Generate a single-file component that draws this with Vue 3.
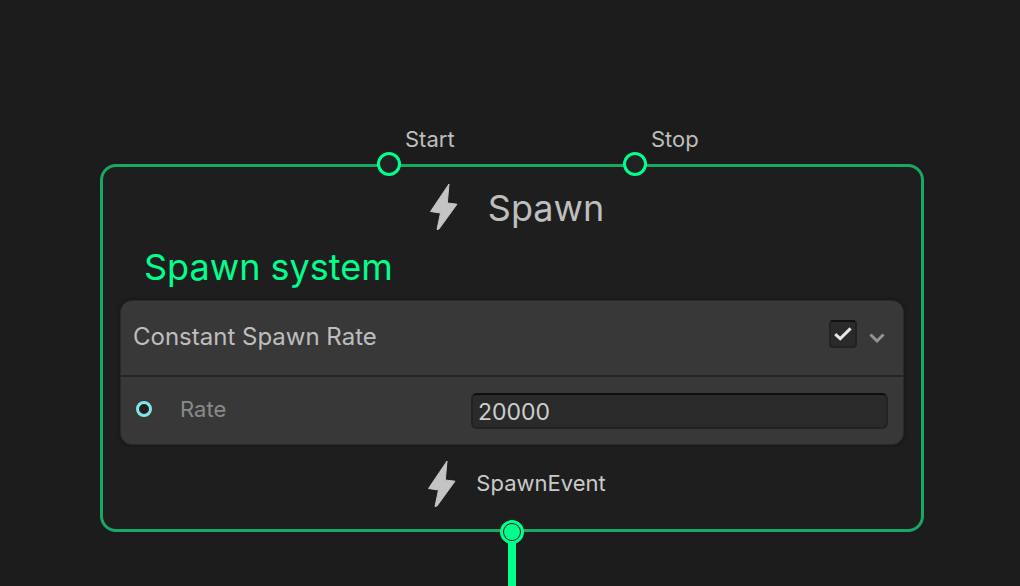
<template>
    <main class="graph">
        <section class="context-node">
            <div class="ports ports-in">
                <div v-for="port in inputPorts" :key="port" class="flow-port">
                    <span class="port-label">{{ port }}</span>
                    <span class="port-dot"></span>
                </div>
            </div>

            <header class="node-header">
                <svg class="bolt" viewBox="0 0 48 48" aria-hidden="true">
                    <path d="M29 1L10.5 28.5L20.5 30L17 46.5L19 46L37 21.2L27.3 20Z" />
                </svg>
                <h1 class="node-title">Spawn</h1>
            </header>

            <h2 class="system-name">Spawn system</h2>

            <div class="block">
                <div class="block-header">
                    <label class="block-title" for="block-enabled">Constant Spawn Rate</label>
                    <input id="block-enabled" v-model="enabled" type="checkbox" class="block-check" />
                    <button class="collapse-btn" aria-label="Collapse" @click="expanded = !expanded">
                        <svg viewBox="0 0 16 12" aria-hidden="true">
                            <path d="M1.5 2.5L8 9L14.5 2.5" />
                        </svg>
                    </button>
                </div>
                <div v-if="expanded" class="block-row">
                    <span class="data-port"></span>
                    <label class="row-label" for="rate">Rate</label>
                    <input id="rate" v-model="rate" type="text" class="row-input" />
                </div>
            </div>

            <footer class="node-footer">
                <svg class="bolt" viewBox="0 0 48 48" aria-hidden="true">
                    <path d="M29 1L10.5 28.5L20.5 30L17 46.5L19 46L37 21.2L27.3 20Z" />
                </svg>
                <span class="event-name">SpawnEvent</span>
            </footer>

            <div class="ports ports-out">
                <span class="edge"></span>
                <span class="port-dot connected"></span>
            </div>
        </section>
    </main>
</template>

<script setup>
import { ref } from 'vue'

const inputPorts = ['Start', 'Stop']
const enabled = ref(true)
const expanded = ref(true)
const rate = ref('20000')
</script>

<style>
body {
    background: #1c1c1c;
}
</style>

<style scoped>
.graph {
    box-sizing: border-box;
    min-height: 100vh;
    padding: 164px 96px 0 100px;
    overflow: hidden;
    font-family: Inter, "Liberation Sans", sans-serif;
    color: #bebebe;
}

.context-node {
    position: relative;
    padding: 12px 17px 21px;
    border: 3px solid #18a866;
    border-radius: 16px;
    background: #1e1e1e;
}

.ports {
    position: absolute;
    left: 0;
    right: 0;
    display: flex;
    justify-content: center;
}

.ports-in {
    top: -15px;
}

.ports-out {
    bottom: -15px;
}

.flow-port {
    position: relative;
    display: flex;
    justify-content: center;
    width: 246px;
}

.port-label {
    position: absolute;
    left: calc(50% + 16px);
    bottom: 22px;
    font-size: 22px;
    line-height: 30px;
}

.port-dot {
    position: relative;
    box-sizing: border-box;
    width: 24px;
    height: 24px;
    border: 3px solid #00ff8c;
    border-radius: 50%;
    background: #212121;
}

.port-dot.connected::after {
    content: "";
    position: absolute;
    inset: 1px;
    border-radius: 50%;
    background: #00ff8c;
}

.edge {
    position: absolute;
    top: 12px;
    left: calc(50% - 4px);
    width: 8px;
    height: 100vh;
    background: #00ff8c;
}

.node-header,
.node-footer {
    display: flex;
    align-items: center;
    justify-content: center;
}

.node-header {
    gap: 20px;
    height: 56px;
}

.node-footer {
    gap: 10px;
    margin-top: 15px;
}

.bolt {
    width: 48px;
    height: 48px;
    fill: #c4c4c4;
    stroke: #c4c4c4;
    stroke-width: 1;
    stroke-linejoin: round;
}

.node-title,
.system-name {
    margin: 0;
    font-size: 36px;
    font-weight: 400;
    line-height: 44px;
}

.node-title {
    padding-top: 2px;
}

.system-name {
    margin: 10px 24px 11px;
    color: #00ff8c;
}

.event-name {
    padding-bottom: 2px;
    font-size: 22px;
    line-height: 30px;
    color: #cacaca;
}

.block {
    border: 1px solid #2a2a2a;
    border-radius: 12px;
    background: #383838;
    box-shadow: 0 0 4px #141414;
}

.block-header {
    display: flex;
    align-items: center;
    height: 74px;
    padding: 0 16px 0 12px;
    border-bottom: 2px solid #242424;
}

.block-title {
    flex: 1;
    padding-bottom: 2px;
    font-size: 24px;
    line-height: 30px;
}

.block-check {
    appearance: none;
    box-sizing: border-box;
    width: 28px;
    height: 28px;
    margin: 0 10px 8px 0;
    border: 2px solid #222;
    border-top-color: #111;
    border-radius: 4px;
    background: #2a2a2a;
}

.block-check:checked {
    background: #2a2a2a url("data:image/svg+xml,%3Csvg xmlns='http://www.w3.org/2000/svg' viewBox='0 0 24 24'%3E%3Cpath d='M4.2 12.2L9.2 16.6L19.6 6.4' fill='none' stroke='%23e6e6e6' stroke-width='3'/%3E%3C/svg%3E") center / 24px 24px no-repeat;
}

.collapse-btn {
    display: flex;
    padding: 2px;
    border: none;
    background: none;
    cursor: pointer;
}

.collapse-btn svg {
    width: 16px;
    height: 12px;
    fill: none;
    stroke: #949494;
    stroke-width: 3;
}

.block-row {
    display: grid;
    grid-template-columns: 16px 263px 1fr;
    column-gap: 28px;
    align-items: center;
    padding: 16px 15px 15px;
}

.data-port {
    box-sizing: border-box;
    width: 16px;
    height: 16px;
    margin-bottom: 4px;
    border: 3px solid #84e4e7;
    border-radius: 50%;
    background: #212121;
}

.row-label {
    padding-bottom: 4px;
    font-size: 22px;
    line-height: 30px;
    color: #8a8a8a;
}

.row-input {
    box-sizing: border-box;
    width: 100%;
    height: 36px;
    padding: 2px 5px 0;
    border: 2px solid #222;
    border-top-color: #0d0d0d;
    border-radius: 6px;
    background: #2a2a2a;
    color: #cecece;
    font-family: inherit;
    font-size: 23px;
    line-height: 30px;
    outline: none;
}
</style>
